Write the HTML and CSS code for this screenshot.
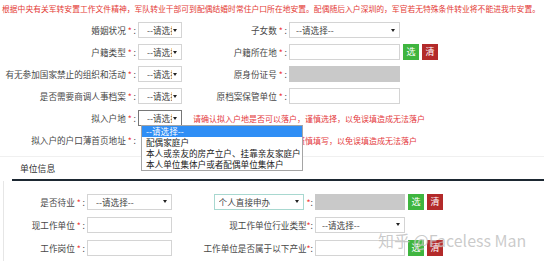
FILE: index.html
```
<!DOCTYPE html>
<html lang="zh-CN">
<head>
  <meta charset="UTF-8" />
  <title>入户申请</title>
  <link rel="stylesheet" href="styles.css">
</head>
<body>

  <!-- === 提示 === -->
  <p class="notice">根据中央有关军转安置工作文件精神，军队转业干部可到配偶结婚时常住户口所在地安置。配偶随后入户深圳的，军官若无特殊条件转业将不能进我市安置。</p>

  <!-- === 基本信息 === -->
  <div class="base">
    <div class="row">
      <label class="lbl lbl-a">婚姻状况 <i>*</i> :</label>
      <div class="sel sel-s"><span>--请选择--</span><b></b></div>
      <label class="lbl lbl-b">子女数 <i>*</i> :</label>
      <div class="sel sel-w"><span>--请选择--</span><b></b></div>
    </div>
    <div class="row">
      <label class="lbl lbl-a">户籍类型 <i>*</i> :</label>
      <div class="sel sel-s"><span>--请选择--</span><b></b></div>
      <label class="lbl lbl-b">户籍所在地 <i>*</i> :</label>
      <div class="inp inp-w"></div>
      <span class="btn btn-ok">选</span>
      <span class="btn btn-clr">清</span>
    </div>
    <div class="row">
      <label class="lbl lbl-a">有无参加国家禁止的组织和活动 <i>*</i> :</label>
      <div class="sel sel-s"><span>--请选择--</span><b></b></div>
      <label class="lbl lbl-b">原身份证号 <i>*</i> :</label>
      <div class="inp inp-w disabled"></div>
    </div>
    <div class="row">
      <label class="lbl lbl-a">是否需要商调人事档案 <i>*</i> :</label>
      <div class="sel sel-s"><span>--请选择--</span><b></b></div>
      <label class="lbl lbl-b">原档案保管单位 <i>*</i> :</label>
      <div class="inp inp-w"></div>
    </div>
    <div class="row">
      <label class="lbl lbl-a">拟入户地 <i>*</i> :</label>
      <div class="sel sel-s focus">
        <span>--请选择--</span><b></b>
        <ul class="drop">
          <li class="on">--请选择--</li>
          <li>配偶家庭户</li>
          <li>本人或亲友的房产立户、挂靠亲友家庭户</li>
          <li>本人单位集体户或者配偶单位集体户</li>
        </ul>
      </div>
      <span class="tip">请确认拟入户地是否可以落户，谨慎选择，以免误填造成无法落户</span>
    </div>
    <div class="row">
      <label class="lbl lbl-a">拟入户的户口薄首页地址 <i>*</i> :</label>
      <span class="tip tip-far">请确认户口簿首页地址信息，谨慎填写，以免误填造成无法落户</span>
    </div>
  </div>

  <!-- === 单位信息 === -->
  <div class="panel">
    <h3 class="panel-head">单位信息</h3>
    <div class="panel-body">
      <div class="row row-b">
        <label class="lbl lbl-c">是否待业 <i>*</i> :</label>
        <div class="sel sel-m"><span>--请选择--</span><b></b></div>
        <label class="lbl lbl-d">
          <span class="sel sel-apply"><span>个人直接申办</span><b></b></span><i>*</i> :
        </label>
        <div class="inp inp-m disabled"></div>
        <span class="btn btn-ok">选</span>
        <span class="btn btn-clr">清</span>
      </div>
      <div class="row row-b">
        <label class="lbl lbl-c">现工作单位 <i>*</i> :</label>
        <div class="inp inp-c"></div>
        <label class="lbl lbl-d">现工作单位行业类型 <i>*</i> :</label>
        <div class="sel sel-r"><span>--请选择--</span><b></b></div>
      </div>
      <div class="row row-b">
        <label class="lbl lbl-c">工作岗位 <i>*</i> :</label>
        <div class="inp inp-c"></div>
        <label class="lbl lbl-d">工作单位是否属于以下产业 <i>*</i> :</label>
        <div class="inp inp-m"></div>
        <span class="btn btn-ok">选</span>
        <span class="btn btn-clr">清</span>
      </div>
    </div>
  </div>

  <div class="watermark">知乎 @Faceless Man</div>

</body>
</html>
```

FILE: styles.css
```
* {
  margin: 0;
  padding: 0;
  box-sizing: border-box;
}

body {
  position: relative;
  height: 261px;
  overflow: hidden;
  background: #fff;
  color: #484848;
  font-family: "Noto Sans CJK SC", "Noto Sans", sans-serif;
  font-size: 8.6px;
}

.notice {
  height: 19px;
  line-height: 17px;
  padding-left: 2px;
  color: #e43a35;
  font-size: 7.8px;
  white-space: nowrap;
}

/* === rows === */
.row {
  display: flex;
  align-items: center;
  height: 22px;
}

.lbl {
  flex-shrink: 0;
  text-align: right;
  white-space: nowrap;
}

.lbl i {
  font-style: normal;
  color: #e33;
}

.lbl-a { width: 136px; margin-right: 2px; }
.lbl-b { width: 105px; margin-right: 2px; }

/* select / input */
.sel, .inp {
  position: relative;
  flex-shrink: 0;
  height: 16px;
  border: 1px solid #d4d4d4;
  background: #fff;
}

.sel {
  display: flex;
  align-items: center;
  padding: 0 4px 0 8px;
  color: #444;
  text-align: left;
}

.sel > span {
  flex: 1;
  overflow: hidden;
  white-space: nowrap;
}

.sel > b {
  flex-shrink: 0;
  width: 0;
  height: 0;
  margin-left: 1px;
  border-left: 2px solid transparent;
  border-right: 2px solid transparent;
  border-top: 3px solid #222;
}

.sel-s { width: 44px; }
.sel-w { width: 111px; padding-left: 6px; }
.inp-w { width: 111px; }

.sel.focus { border-color: #777; }

.disabled {
  background: #c9c9c9;
  border-color: #c9c9c9;
}

.btn {
  flex-shrink: 0;
  width: 16px;
  height: 16px;
  line-height: 16px;
  text-align: center;
  color: #fff;
  font-size: 9px;
}

.btn-ok { margin-left: 3px; background: #3fb53f; }
.btn-clr { margin-left: 3px; background: #b32a2a; }

.tip {
  margin-left: 11px;
  color: #e4393c;
  font-size: 8px;
  white-space: nowrap;
}

.tip-far { margin-left: 55px; }

/* dropdown list */
.drop {
  position: absolute;
  top: 14px;
  left: 2px;
  width: 162px;
  list-style: none;
  border: 1px solid #a5a5a5;
  background: #fff;
  z-index: 5;
}

.drop li {
  height: 11px;
  line-height: 11px;
  padding-left: 4px;
  color: #222;
  white-space: nowrap;
}

.drop li.on {
  background: #2f8ef5;
  color: #fff;
}

/* === panel === */
.panel {
  margin-top: 5px;
  border-top: 1px solid #f0f0f0;
}

.panel-head {
  margin-left: 12px;
  padding: 2px 0 0 8px;
  height: 24px;
  line-height: 20px;
  font-size: 8.8px;
  font-weight: normal;
  color: #333;
  border-bottom: 2px solid #1d2832;
}

.panel-body {
  margin-left: 3px;
  padding-top: 9px;
  border-left: 1px solid #e6e6e6;
  height: 90px;
}

.row-b { height: 23px; }

.lbl-c { width: 81px; margin-right: 2px; }
.lbl-d {
  width: 141px;
  margin-right: 2px;
  display: flex;
  align-items: center;
  justify-content: flex-end;
}

.sel-m { width: 85px; }
.inp-c { width: 85px; }
.sel-r { width: 90px; padding-left: 6px; }
.inp-m { width: 90px; }

.sel-apply {
  width: 90px;
  margin-right: 3px;
  padding-left: 4px;
  border-color: #a8d8d0;
}

.watermark {
  position: absolute;
  left: 378px;
  top: 228px;
  font-size: 16px;
  color: rgba(150, 150, 150, 0.5);
  text-shadow: 0 0 1px rgba(255, 255, 255, 0.8);
  white-space: nowrap;
  pointer-events: none;
}
```
